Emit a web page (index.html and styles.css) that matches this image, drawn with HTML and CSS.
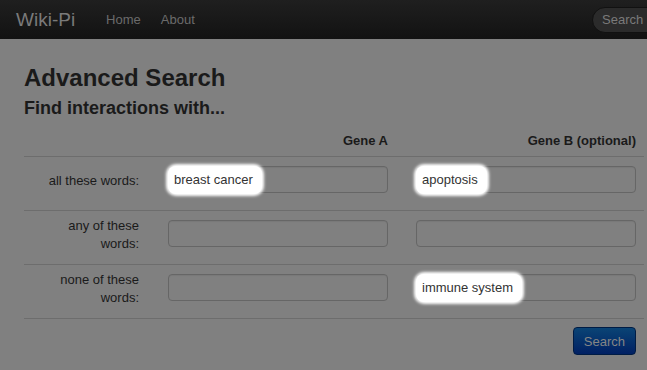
FILE: index.html
```html
<!DOCTYPE html>
<html lang="en">
<head>
  <meta charset="UTF-8" />
  <title>Wiki-Pi — Advanced Search</title>
  <link rel="stylesheet" href="styles.css">
</head>
<body>
  <div class="navbar">
    <a class="brand" href="#">Wiki-Pi</a>
    <ul class="nav">
      <li><a href="#">Home</a></li>
      <li><a href="#">About</a></li>
    </ul>
    <input class="nav-search" type="text" placeholder="Search">
  </div>

  <div class="page">
    <h1>Advanced Search</h1>
    <h2>Find interactions with...</h2>

    <div class="search-table">
      <div class="row head">
        <div class="cell label"></div>
        <div class="cell col-a">Gene A</div>
        <div class="cell col-b">Gene B (optional)</div>
      </div>

      <div class="row">
        <div class="cell label">all these words:</div>
        <div class="cell col-a">
          <div class="field"><span class="hl">breast cancer</span></div>
        </div>
        <div class="cell col-b">
          <div class="field"><span class="hl">apoptosis</span></div>
        </div>
      </div>

      <div class="row">
        <div class="cell label">any of these words:</div>
        <div class="cell col-a"><div class="field"></div></div>
        <div class="cell col-b"><div class="field"></div></div>
      </div>

      <div class="row">
        <div class="cell label">none of these words:</div>
        <div class="cell col-a"><div class="field"></div></div>
        <div class="cell col-b">
          <div class="field"><span class="hl">immune system</span></div>
        </div>
      </div>

      <div class="actions">
        <button class="btn" type="button">Search</button>
      </div>
    </div>
  </div>
</body>
</html>
```

FILE: styles.css
```css
body {
  margin: 0;
  font-family: 'Liberation Sans', Arial, sans-serif;
  font-size: 13px;
  line-height: 18px;
  background-color: #808080;
  color: #1a1a1a;
  overflow: hidden;
}

/* top bar */
.navbar {
  height: 39px;
  display: flex;
  align-items: center;
  background: linear-gradient(to bottom, #1f1f1f, #121212);
  overflow: hidden;
}

.brand {
  margin-left: 16px;
  font-size: 19px;
  color: #7a7a7a;
  text-decoration: none;
}

.nav {
  list-style: none;
  margin: 0 0 0 21px;
  padding: 0;
  display: flex;
  flex: 1;
}

.nav a {
  display: block;
  padding: 0 10px;
  color: #6b6b6b;
  text-decoration: none;
}

.nav-search {
  box-sizing: border-box;
  width: 72px;
  height: 26px;
  margin-right: -17px;
  padding: 0 9px;
  border: 1px solid #111;
  border-radius: 13px;
  background: #2b2b2b;
  font-family: inherit;
  font-size: 13px;
  color: #7a7a7a;
  outline: none;
}

.nav-search::placeholder {
  color: #7a7a7a;
}

/* content */
.page {
  padding: 24px 3px 0 24px;
}

h1 {
  margin: 0 0 3px;
  font-size: 24px;
  line-height: 30px;
  font-weight: 700;
}

h2 {
  margin: 0 0 4px;
  font-size: 18px;
  line-height: 24px;
  font-weight: 700;
}

.search-table {
  width: 620px;
}

.row {
  display: grid;
  grid-template-columns: 136px 248px 236px;
  height: 53px;
  border-bottom: 1px solid #6d6d6d;
}

.row.head {
  height: 32px;
  font-weight: 700;
}

.row.head .cell {
  padding-top: 8px;
  text-align: right;
}

.cell.col-a {
  padding: 9px 20px 0 8px;
}

.cell.col-b {
  padding: 9px 8px 0 8px;
}

.cell.label {
  display: flex;
  align-items: center;
  justify-content: flex-end;
  text-align: right;
  padding: 0 21px 5px 8px;
}

.field {
  position: relative;
  box-sizing: border-box;
  width: 220px;
  height: 27px;
  border: 1px solid #666;
  border-radius: 4px;
  background: #808080;
  box-shadow: inset 0 1px 1px rgba(0, 0, 0, 0.06);
}

/* white spotlight over the filled-in value */
.hl {
  position: absolute;
  left: -1px;
  top: -1px;
  bottom: -2px;
  display: flex;
  align-items: center;
  padding: 0 9px 0 6px;
  border-radius: 8px;
  background: #fff;
  box-shadow: 0 0 3px 2px #fff;
  color: #333;
  white-space: nowrap;
}

.actions {
  display: flex;
  justify-content: flex-end;
  padding: 8px 8px 0 0;
}

.btn {
  height: 28px;
  padding: 0 10px;
  border: 1px solid #001c45;
  border-radius: 4px;
  background: linear-gradient(to bottom, #0a4475, #012063);
  font-family: inherit;
  font-size: 13px;
  color: #858585;
  cursor: pointer;
}
```
